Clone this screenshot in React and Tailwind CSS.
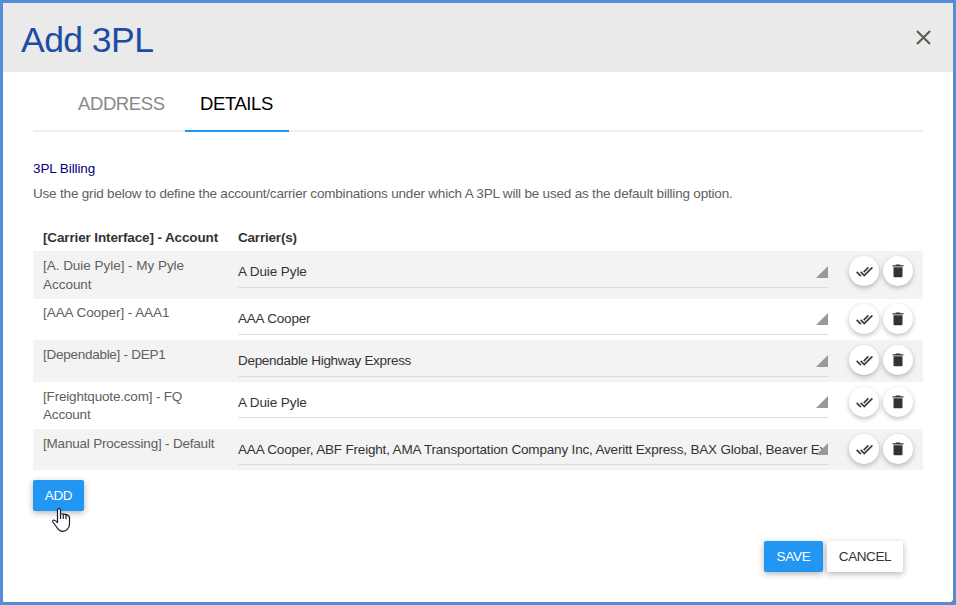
const rows = [
  { account: "[A. Duie Pyle] - My Pyle Account", carriers: "A Duie Pyle", height: "h-[48px]", field: "h-[37px]", arrow: "top-[15px]", name: "pt-[6px] leading-[18.5px] tracking-[-0.03px]", value: "pt-[11px] tracking-[-0.1px]" },
  { account: "[AAA Cooper] - AAA1", carriers: "AAA Cooper", height: "h-[41px]", field: "h-[36px]", arrow: "top-[14px]", name: "pt-[5px] leading-[18.5px] tracking-[-0.06px]", value: "pt-[10px] tracking-[-0.2px]" },
  { account: "[Dependable] - DEP1", carriers: "Dependable Highway Express", height: "h-[42px]", field: "h-[37px]", arrow: "top-[15px]", name: "pt-[6px] leading-[18.5px] tracking-[-0.27px]", value: "pt-[11px] tracking-[-0.3px]" },
  { account: "[Freightquote.com] - FQ Account", carriers: "A Duie Pyle", height: "h-[47px]", field: "h-[36px]", arrow: "top-[14px]", name: "pt-[6px] leading-[18px] tracking-[-0.18px]", value: "pt-[11px] tracking-[-0.1px]" },
  {
    account: "[Manual Processing] - Default",
    carriers: "AAA Cooper, ABF Freight, AMA Transportation Company Inc, Averitt Express, BAX Global, Beaver Ex",
    height: "h-[41px]", field: "h-[36px]", arrow: "top-[14px]", name: "pt-[6px] leading-[18.5px] tracking-[-0.2px]", value: "pt-[11px] tracking-[-0.18px]",
  },
];

function RoundButton({ label, children }) {
  return (
    <button aria-label={label} className="flex size-[30px] shrink-0 items-center justify-center rounded-full bg-white text-[#333] shadow-[0_2px_5px_rgba(0,0,0,0.26)]">
      {children}
    </button>
  );
}

function DoubleCheck() {
  return (
    <svg className="mt-px" width="17" height="17" viewBox="0 0 24 24" fill="currentColor" stroke="currentColor" strokeWidth="0.5">
      <path d="M18 7l-1.410-1.410-6.340 6.340 1.410 1.410L18 7zm4.240-1.410L11.660 16.170 7.480 12l-1.410 1.410L11.660 19l12-12-1.420-1.410zM.41 13.410L6 19l1.410-1.410L1.830 12 .41 13.410z" />
    </svg>
  );
}

function Trash() {
  return (
    <svg width="12" height="14" viewBox="0 0 12 14" fill="currentColor">
      <path d="M.6 1.200H3.400L4 .4h4l.6.8h2.800v1.300H.6zM1.500 3.300h9v9q0 1-1 1h-7q-1 0-1-1z" />
    </svg>
  );
}

function Row({ row, striped }) {
  return (
    <div className={`flex items-start ${row.height} ${striped ? "bg-[#f3f3f3]" : "bg-white"}`}>
      <div className={`w-[205px] shrink-0 pr-[15px] pl-[10px] text-[#606060] ${row.name}`}>{row.account}</div>
      <div className={`relative w-[590px] shrink-0 border-b border-[#dcdcdc] ${row.field}`}>
        <div className={`whitespace-nowrap leading-5 text-[#333] ${row.value}`}>{row.carriers}</div>
        <svg className={`absolute right-0 ${row.arrow}`} width="12" height="12" viewBox="0 0 12 12">
          <path d="M12 0v12H0z" fill="#999" />
        </svg>
      </div>
      <div className="flex gap-1 pt-[5px] pl-[21px]">
        <RoundButton label="Select all"><DoubleCheck /></RoundButton>
        <RoundButton label="Delete"><Trash /></RoundButton>
      </div>
    </div>
  );
}

export default function App() {
  return (
    <div className="relative h-[605px] w-[956px] overflow-hidden border-[3px] border-[#548dd4] bg-white font-['Liberation_Sans',Arial,sans-serif] text-[13.5px] text-[#333]">
      <header className="flex h-[69px] items-center justify-between bg-[#eaeaea] pr-[22px] pl-[18px]">
        <h1 className="pt-[5px] text-[35.5px] leading-10 tracking-[-0.55px] text-[#1c4ca6]">Add 3PL</h1>
        <svg width="15" height="15" viewBox="0 0 15 15" fill="none" stroke="#59624e" strokeWidth="2.2">
          <path d="M1 1l13 13M14 1L1 14" />
        </svg>
      </header>
      <main className="px-[30px]">
        <nav className="flex h-[60px] border-b-2 border-[#eee] pl-[30px] text-[18.5px] tracking-[-0.4px]">
          <span className="flex h-[60px] w-[122px] items-center pt-[3px] pl-[15px] text-[#888]">ADDRESS</span>
          <span className="flex h-[60px] w-[104px] items-center border-b-2 border-[#2196f3] pt-[5px] pl-[15px] text-black">DETAILS</span>
        </nav>
        <h2 className="mt-[27px] leading-5 tracking-[-0.1px] text-[#000080]">3PL Billing</h2>
        <p className="mt-[5px] leading-5 tracking-[-0.19px] whitespace-nowrap text-[#606060]">
          Use the grid below to define the account/carrier combinations under which A 3PL will be used as the default billing option.
        </p>
        <div className="mt-[24px] flex h-[23px] font-bold leading-5 tracking-[-0.13px]">
          <span className="w-[205px] pl-[10px] whitespace-nowrap">[Carrier Interface] - Account</span>
          <span className="tracking-[-0.2px]">Carrier(s)</span>
        </div>
        {rows.map((row, i) => <Row key={row.account} row={row} striped={i % 2 === 0} />)}
        <button className="mt-[10px] flex h-[31px] w-[51px] items-center justify-center rounded-[2px] bg-[#2196f3] pt-[2px] tracking-[-0.4px] text-white shadow-[0_2px_6px_rgba(0,0,0,0.3)]">ADD</button>
        <div className="mt-[30px] flex justify-end gap-1 pr-5">
          <button className="h-[31px] w-[59px] rounded-[2px] bg-[#2196f3] pt-[2px] tracking-[-0.2px] text-white shadow-[0_2px_6px_rgba(0,0,0,0.3)]">SAVE</button>
          <button className="h-[31px] w-[76px] rounded-[2px] bg-white pt-[2px] tracking-[-0.4px] text-[#333] shadow-[0_2px_6px_rgba(0,0,0,0.3)]">CANCEL</button>
        </div>
      </main>
      <svg className="absolute top-[505px] left-[49px]" width="20" height="25" viewBox="0 0 20 25" fill="#fff" stroke="#1b1b2b" strokeWidth="1.2" strokeLinejoin="round" strokeLinecap="round">
        <path d="M5.500 14.500V2.200q0-1.600 1.500-1.600t1.500 1.600V6q1.300-.6 2.600.2q1.500-.4 2.600.5q1.700-.2 2.300.9q1.500.3 1.500 1.900V16q0 3-2 5q-1.500 2.300-5 2.300q-3.300 0-4.800-2.800L.8 14q-.4-1.800 1-2q1.300.1 3.700 2.500z" />
        <path d="M8.500 6v4.500M11.300 6.500v4M14 7.200v3.500" fill="none" />
      </svg>
      <svg className="absolute right-0 bottom-0" width="2" height="2" viewBox="0 0 2 2"><path d="M2 0v2H0z" fill="#777" /></svg>
    </div>
  );
}
